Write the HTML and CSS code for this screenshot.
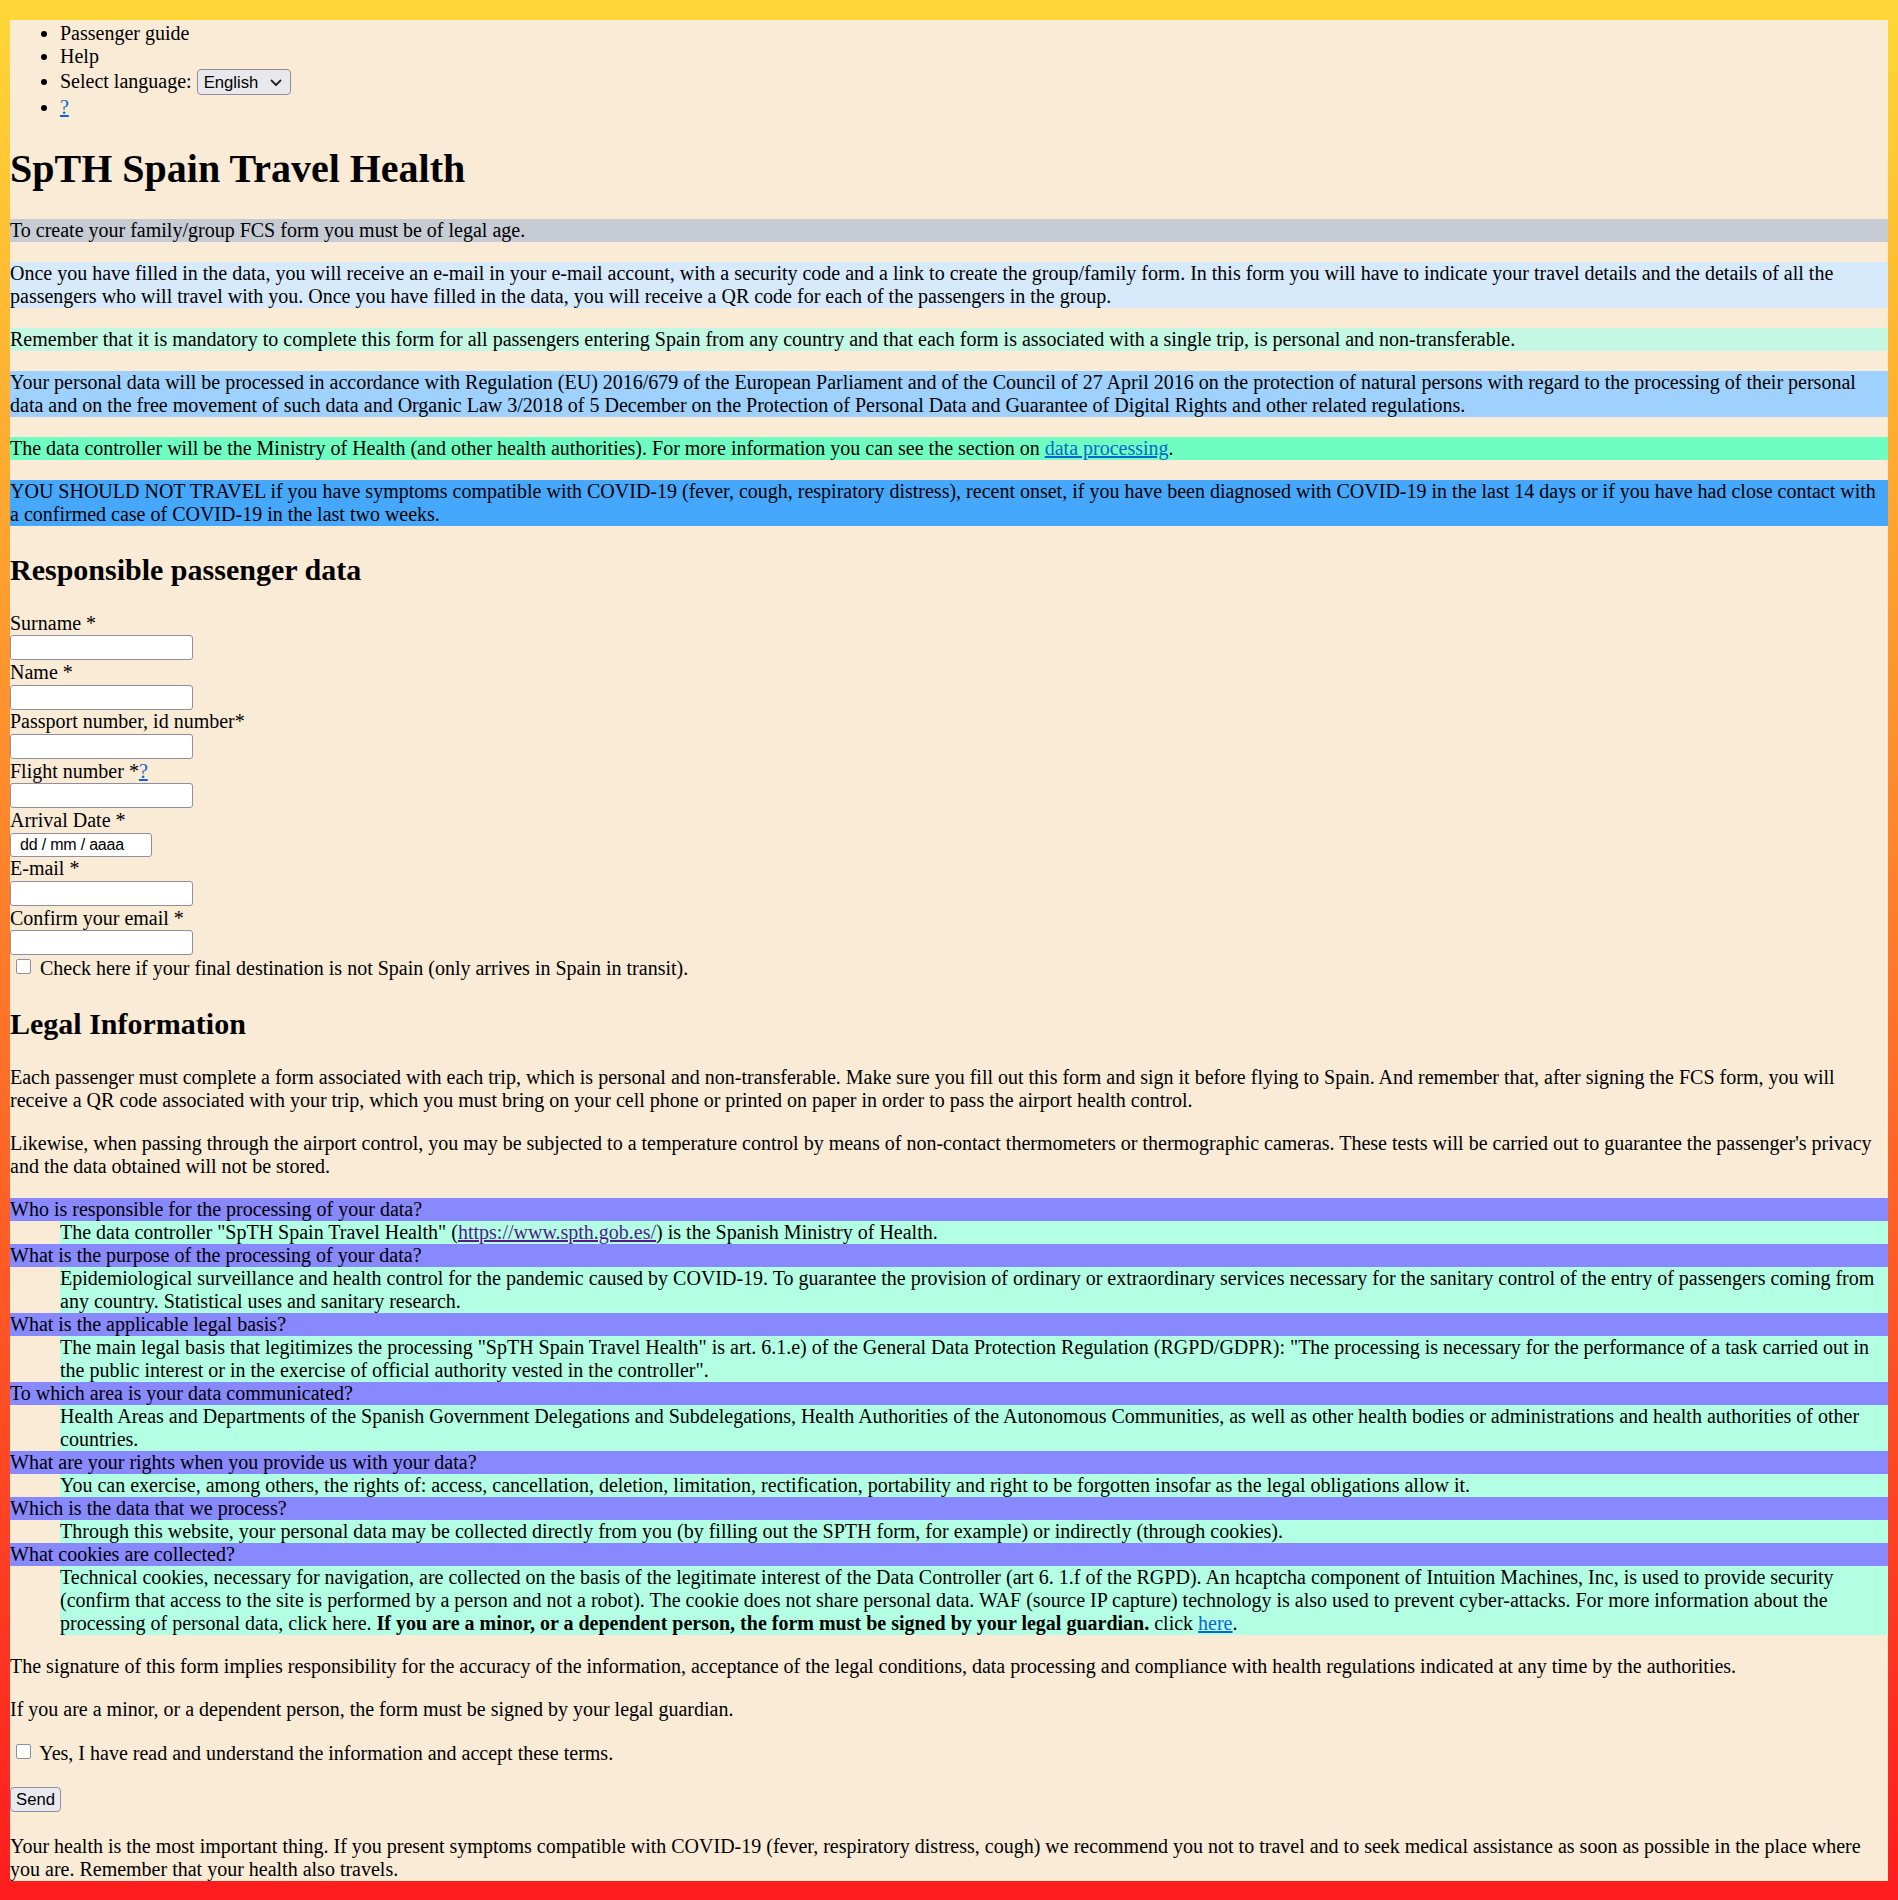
FILE: index.html
```html
<!DOCTYPE html>
<html lang="en">
<head>
<meta charset="utf-8">
<title>SpTH Spain Travel Health</title>
<link rel="stylesheet" href="styles.css">
</head>
<body>
<ul class="topnav">
  <li>Passenger guide</li>
  <li>Help</li>
  <li>Select language: <span class="select-wrap"><select class="lang"><option>English</option><option>Español</option></select><svg class="chev" width="12" height="8" viewBox="0 0 12 8"><path d="M1.5 1.5 L6 6 L10.5 1.5" fill="none" stroke="#222" stroke-width="1.8" stroke-linecap="round" stroke-linejoin="round"/></svg></span></li>
  <li><a href="#" class="link">?</a></li>
</ul>

<h1>SpTH Spain Travel Health</h1>

<p class="note note-gray">To create your family/group FCS form you must be of legal age.</p>
<p class="note note-sky">Once you have filled in the data, you will receive an e-mail in your e-mail account, with a security code and a link to create the group/family form. In this form you will have to indicate your travel details and the details of all the passengers who will travel with you. Once you have filled in the data, you will receive a QR code for each of the passengers in the group.</p>
<p class="note note-mint">Remember that it is mandatory to complete this form for all passengers entering Spain from any country and that each form is associated with a single trip, is personal and non-transferable.</p>
<p class="note note-blue">Your personal data will be processed in accordance with Regulation (EU) 2016/679 of the European Parliament and of the Council of 27 April 2016 on the protection of natural persons with regard to the processing of their personal data and on the free movement of such data and Organic Law 3/2018 of 5 December on the Protection of Personal Data and Guarantee of Digital Rights and other related regulations.</p>
<p class="note note-green">The data controller will be the Ministry of Health (and other health authorities). For more information you can see the section on <a href="#" class="link">data processing</a>.</p>
<p class="note note-deep">YOU SHOULD NOT TRAVEL if you have symptoms compatible with COVID-19 (fever, cough, respiratory distress), recent onset, if you have been diagnosed with COVID-19 in the last 14 days or if you have had close contact with a confirmed case of COVID-19 in the last two weeks.</p>

<h2 class="section-title">Responsible passenger data</h2>
<form class="passenger-form">
  <label class="field-label" for="surname">Surname *</label>
  <input class="field" id="surname" type="text">
  <label class="field-label" for="name">Name *</label>
  <input class="field" id="name" type="text">
  <label class="field-label" for="passport">Passport number, id number*</label>
  <input class="field" id="passport" type="text">
  <label class="field-label" for="flight">Flight number *<a href="#" class="link">?</a></label>
  <input class="field" id="flight" type="text">
  <label class="field-label" for="arrival">Arrival Date *</label>
  <input class="field field-date" id="arrival" type="text" placeholder="dd / mm / aaaa">
  <label class="field-label" for="email">E-mail *</label>
  <input class="field" id="email" type="text">
  <label class="field-label" for="email2">Confirm your email *</label>
  <input class="field" id="email2" type="text">
  <div class="check-line"><input type="checkbox" class="check" id="transit"> <label for="transit">Check here if your final destination is not Spain (only arrives in Spain in transit).</label></div>
</form>

<h2 class="section-title">Legal Information</h2>
<p>Each passenger must complete a form associated with each trip, which is personal and non-transferable. Make sure you fill out this form and sign it before flying to Spain. And remember that, after signing the FCS form, you will receive a QR code associated with your trip, which you must bring on your cell phone or printed on paper in order to pass the airport health control.</p>
<p>Likewise, when passing through the airport control, you may be subjected to a temperature control by means of non-contact thermometers or thermographic cameras. These tests will be carried out to guarantee the passenger's privacy and the data obtained will not be stored.</p>

<dl class="faq">
  <dt>Who is responsible for the processing of your data?</dt>
  <dd>The data controller "SpTH Spain Travel Health" (<a href="#" class="link visited">https://www.spth.gob.es/</a>) is the Spanish Ministry of Health.</dd>
  <dt>What is the purpose of the processing of your data?</dt>
  <dd>Epidemiological surveillance and health control for the pandemic caused by COVID-19. To guarantee the provision of ordinary or extraordinary services necessary for the sanitary control of the entry of passengers coming from any country. Statistical uses and sanitary research.</dd>
  <dt>What is the applicable legal basis?</dt>
  <dd>The main legal basis that legitimizes the processing "SpTH Spain Travel Health" is art. 6.1.e) of the General Data Protection Regulation (RGPD/GDPR): "The processing is necessary for the performance of a task carried out in the public interest or in the exercise of official authority vested in the controller".</dd>
  <dt>To which area is your data communicated?</dt>
  <dd>Health Areas and Departments of the Spanish Government Delegations and Subdelegations, Health Authorities of the Autonomous Communities, as well as other health bodies or administrations and health authorities of other countries.</dd>
  <dt>What are your rights when you provide us with your data?</dt>
  <dd>You can exercise, among others, the rights of: access, cancellation, deletion, limitation, rectification, portability and right to be forgotten insofar as the legal obligations allow it.</dd>
  <dt>Which is the data that we process?</dt>
  <dd>Through this website, your personal data may be collected directly from you (by filling out the SPTH form, for example) or indirectly (through cookies).</dd>
  <dt>What cookies are collected?</dt>
  <dd>Technical cookies, necessary for navigation, are collected on the basis of the legitimate interest of the Data Controller (art 6. 1.f of the RGPD). An hcaptcha component of Intuition Machines, Inc, is used to provide security (confirm that access to the site is performed by a person and not a robot). The cookie does not share personal data. WAF (source IP capture) technology is also used to prevent cyber-attacks. For more information about the processing of personal data, click here. <b>If you are a minor, or a dependent person, the form must be signed by your legal guardian.</b> click <a href="#" class="link">here</a>.</dd>
</dl>

<p>The signature of this form implies responsibility for the accuracy of the information, acceptance of the legal conditions, data processing and compliance with health regulations indicated at any time by the authorities.</p>
<p>If you are a minor, or a dependent person, the form must be signed by your legal guardian.</p>
<p><input type="checkbox" class="check" id="accept"> <label for="accept">Yes, I have read and understand the information and accept these terms.</label></p>
<p class="send-row"><button class="send" type="button">Send</button></p>
<p class="closing">Your health is the most important thing. If you present symptoms compatible with COVID-19 (fever, respiratory distress, cough) we recommend you not to travel and to seek medical assistance as soon as possible in the place where you are. Remember that your health also travels.</p>
</body>
</html>
```

FILE: styles.css
```css
html {
  min-height: 100%;
  background: linear-gradient(to bottom, #ffd836, #ff1c1e);
}

body {
  display: flow-root;
  margin: 20px 10px;
  background: #faebd7;
  color: #000;
  font-family: "Liberation Serif", "Times New Roman", serif;
  font-size: 20px;
  line-height: normal;
}

p {
  margin: 20px 0;
}

h1 {
  font-size: 40px;
  margin: 26px 0 27px;
  font-weight: bold;
}

h2 {
  font-size: 30px;
  margin: 24.9px 0;
  font-weight: bold;
}

.section-title {
  margin-top: 27px;
}

.topnav {
  margin: 0 0 20px;
  padding-left: 50px;
}

.topnav li:first-child {
  padding-top: 2px;
}

.link {
  color: #0b66d0;
  text-decoration: underline;
}

.link.visited {
  color: #551a8b;
}

.select-wrap {
  position: relative;
  display: inline-block;
  vertical-align: baseline;
}

.lang {
  appearance: none;
  -webkit-appearance: none;
  box-sizing: border-box;
  width: 94px;
  height: 26px;
  padding: 0 24px 0 6px;
  margin: 1px 0;
  border: 1px solid #8f8f9d;
  border-radius: 4px;
  background: #e9e9ed;
  color: #000;
  font-family: "Liberation Sans", Arial, sans-serif;
  font-size: 16.7px;
}

.chev {
  position: absolute;
  right: 9px;
  top: 11px;
  pointer-events: none;
}

.note-gray { background: #c7cbd3; }
.note-sky { background: #d7eafc; }
.note-mint { background: #c5f8e2; }
.note-blue { background: #9fd1fe; }
.note-green { background: #6ffec2; }
.note-deep { background: #45a8fd; }

.passenger-form {
  margin: 0;
}

.field-label {
  display: block;
}

.field {
  display: block;
  box-sizing: border-box;
  width: 183px;
  height: 25px;
  margin: 0.6px 0 0.7px;
  padding: 1px 3px;
  border: 1px solid #8f8f9d;
  border-radius: 3px;
  background: #fff;
  font-family: "Liberation Sans", Arial, sans-serif;
  font-size: 16.7px;
}

.field-date {
  width: 142px;
  height: 24px;
  padding: 1px 9px;
  font-size: 16px;
  letter-spacing: -0.2px;
}

.field-date::placeholder {
  color: #000;
  opacity: 1;
}

.check-line {
  line-height: 23px;
}

.check {
  appearance: none;
  -webkit-appearance: none;
  box-sizing: border-box;
  width: 15px;
  height: 15px;
  margin: 3px 4px 3px 6px;
  border: 1px solid #8f8f9d;
  border-radius: 2px;
  background: #fff;
  vertical-align: -2px;
}

.faq {
  margin: 20px 0;
}

.faq dt {
  background: #8888ff;
}

.faq dd {
  margin-left: 50px;
  background: #b3ffe4;
}

.send-row {
  margin: 22px 0 23px;
}

.send {
  box-sizing: border-box;
  height: 25px;
  padding: 0 5px;
  border: 1px solid #8f8f9d;
  border-radius: 4px;
  background: #e9e9ed;
  color: #000;
  font-family: "Liberation Sans", Arial, sans-serif;
  font-size: 16.7px;
}

.closing {
  margin-bottom: 0;
}
```
